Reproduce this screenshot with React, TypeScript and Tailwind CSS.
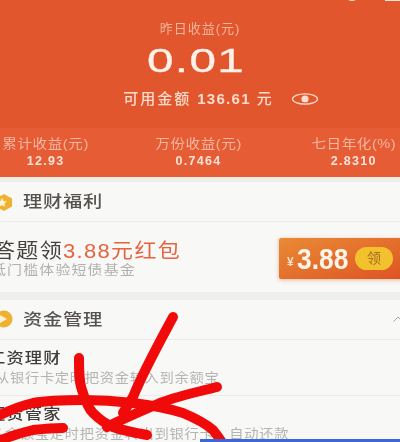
const font = { fontFamily: '"Liberation Sans", "Noto Sans CJK SC", sans-serif' };

function Stat({ label, value, className }: { label: string; value: string; className: string }) {
  return (
    <div className={`absolute top-[6px] flex flex-col items-center ${className}`}>
      <span className="scale-x-[1.12] text-[13px] leading-[20px] tracking-[0.5px] text-[#f3b7a0] whitespace-nowrap">{label}</span>
      <span className="text-[12.500px] leading-[14px] font-bold tracking-[1.300px] text-[#fbe3d9]">{value}</span>
    </div>
  );
}

function SectionHead({ title, icon }: { title: string; icon: React.ReactNode }) {
  return (
    <div className="flex h-[40px] items-center border-b border-[#ebebeb] pl-[23px]">
      <span className="origin-left scale-x-[1.2] text-[16px] font-medium tracking-[0.7px] text-[#55524f]">{title}</span>
      {icon}
    </div>
  );
}

function ManageRow({ title, desc, titleOffset, descOffset }: { title: string; desc: string; titleOffset: string; descOffset: string }) {
  return (
    <div className="h-[56px] border-b border-[#ebebeb] overflow-hidden whitespace-nowrap">
      <div className={`origin-left scale-x-[1.15] pt-[8px] text-[15px] leading-[20px] font-medium tracking-[1px] text-[#3f3d3b] ${titleOffset}`}>{title}</div>
      <div className={`origin-left scale-x-[1.1] text-[13px] leading-[20px] tracking-[0.600px] text-[#b4b4b2] ${descOffset}`}>{desc}</div>
    </div>
  );
}

export default function App() {
  return (
    <div className="relative w-[400px] h-[442px] overflow-hidden bg-[#f8f8f7] blur-[0.4px]" style={font}>
      {/* orange header */}
      <div className="relative h-[177px] overflow-hidden bg-[#e2562e]">
        <span className="absolute left-[173px] top-[-18px] scale-x-[1.1] text-[17px] leading-[19px] tracking-[1px] text-[#fbdccd]">余额宝</span>
        <div className="absolute left-[345px] top-[-13px] h-[14px] w-[14px] rounded-full bg-[#fbe3d9]" />
        <div className="absolute left-[385px] top-[-13px] h-[14px] w-[15px] bg-[#fbe3d9]" />
        <div className="flex flex-col items-center pt-[19px]">
          <span className="text-[13px] leading-[20px] tracking-[1px] text-[#f2b29b]">昨日收益(元)</span>
          <span className="mt-[1px] -translate-x-[4px] scale-x-[1.4] text-[34px] leading-[40px] tracking-[1px] text-[#fdf1ea] [-webkit-text-stroke:0.3px_#fdf1ea]">0.01</span>
          <div className="mt-[10px] ml-[42px] flex items-center whitespace-nowrap text-[15px] leading-[18px] font-medium tracking-[2px] text-[#fbdccd]">
            <span>可用金额</span>
            <span className="ml-[6px] font-bold tracking-[1.300px]">136.61</span>
            <span className="ml-[6px]">元</span>
            <svg className="ml-[17px]" width="28" height="14" viewBox="0 0 28 14" fill="none">
              <ellipse cx="14" cy="7" rx="12.500" ry="5.200" stroke="#fbdccd" strokeWidth="1.200" />
              <circle cx="14" cy="7" r="3.600" fill="#fbdccd" />
            </svg>
          </div>
        </div>
        <div className="absolute left-0 right-0 top-[128px] h-[49px] bg-[#e55c35]">
          <Stat label="累计收益(元)" value="12.93" className="left-[7px]" />
          <Stat label="万份收益(元)" value="0.7464" className="left-[160px]" />
          <Stat label="七日年化(%)" value="2.8310" className="left-[316px]" />
        </div>
      </div>
      <div className="h-[5px] bg-[#ecece9]" />

      {/* welfare */}
      <SectionHead
        title="理财福利"
        icon={
          <svg className="absolute left-[-5px] top-[193px]" width="18" height="19" viewBox="0 0 18 19">
            <path d="M9 1l8 4.500v8L9 18l-8-4.500v-8z" fill="#efb12f" />
            <path d="M7 5l1.500 3 3.300.4-2.400 2.200.6 3.200L7 12.300l-3 1.500.6-3.200-2.400-2.200 3.300-.4z" fill="#fdf3d4" />
          </svg>
        }
      />
      <div className="relative h-[70px] whitespace-nowrap">
        <div className="-ml-[7px] origin-left scale-x-[1.1] pt-[16px] text-[20px] leading-[26px] tracking-[1.200px] text-[#45423f]">
          答题领<span className="text-[#e4643f]">3.88元红包</span>
        </div>
        <div className="-mt-[3px] -ml-[9px] origin-left scale-x-[1.15] text-[13px] leading-[18px] tracking-[1px] text-[#b2b0ae]">低门槛体验短债基金</div>
        <div className="absolute left-[279px] top-[16px] flex h-[41px] w-[125px] items-center rounded-[2px] bg-gradient-to-br from-[#e98a35] to-[#dd5224] pl-[8px] shadow-[0_1px_4px_rgba(226,120,60,0.5)]">
          <span className="mt-[7px] w-[10px] text-[12px] font-bold text-[#fbe0c4]">¥</span>
          <span className="w-[58px] origin-left scale-x-[0.88] text-[30px] font-bold text-[#fff5ea]">3.88</span>
          <span className="flex h-[23px] w-[38px] items-center justify-center rounded-full bg-[#f2c12e] text-[14px] text-[#a56b22]">领</span>
        </div>
      </div>
      <div className="h-[8px] bg-[#efefed]" />

      {/* money management */}
      <SectionHead
        title="资金管理"
        icon={
          <>
            <svg className="absolute left-[-5px] top-[310px]" width="18" height="18" viewBox="0 0 18 18">
              <circle cx="9" cy="9" r="8.500" fill="#efb12f" />
              <path d="M5 5l7 4-7 4z" fill="#fdf3d4" />
            </svg>
            <svg className="absolute left-[393px] top-[316px]" width="10" height="6" viewBox="0 0 10 6" fill="none">
              <path d="M0.500 5.500L5 1l4.500 4.500" stroke="#a8a8a6" strokeWidth="1" />
            </svg>
          </>
        }
      />
      <ManageRow title="工资理财" desc="从银行卡定时把资金转入到余额宝" titleOffset="-ml-[12px]" descOffset="-ml-[5px]" />
      <ManageRow title="还贷管家" desc="从余额宝定时把资金转出到银行卡，自动还款" titleOffset="-ml-[12px]" descOffset="-ml-[10px]" />

      {/* hand drawn arrow over the screenshot */}
      <svg className="absolute left-0 top-0" width="400" height="442" viewBox="0 0 400 442" fill="none">
        <g stroke="#f00a0a" strokeWidth="10" strokeLinecap="round" strokeLinejoin="round">
          <path d="M173 317C158 345 143 372 133 397L123 413" />
          <path d="M79 358C79 372 79 382 82 390C85 400 88 408 93 413C100 420 106 424 113 427C124 431 136 433 147 435" />
          <path d="M217 387C197 392 178 396 160 403C146 409 130 416 117 422L107 427" />
          <path d="M-4 417C8 411 20 406 33 403C50 400 67 400 83 400C100 400 116 401 133 403C150 405 167 408 183 413C195 418 206 424 213 430C217 435 220 439 223 444" />
          <path d="M63 428C52 428 42 429 33 430C20 433 8 437 -4 442" />
        </g>
      </svg>
      <div className="absolute left-[200px] top-[439px] h-[3px] w-[200px] bg-[#3b68d6]" />
    </div>
  );
}
